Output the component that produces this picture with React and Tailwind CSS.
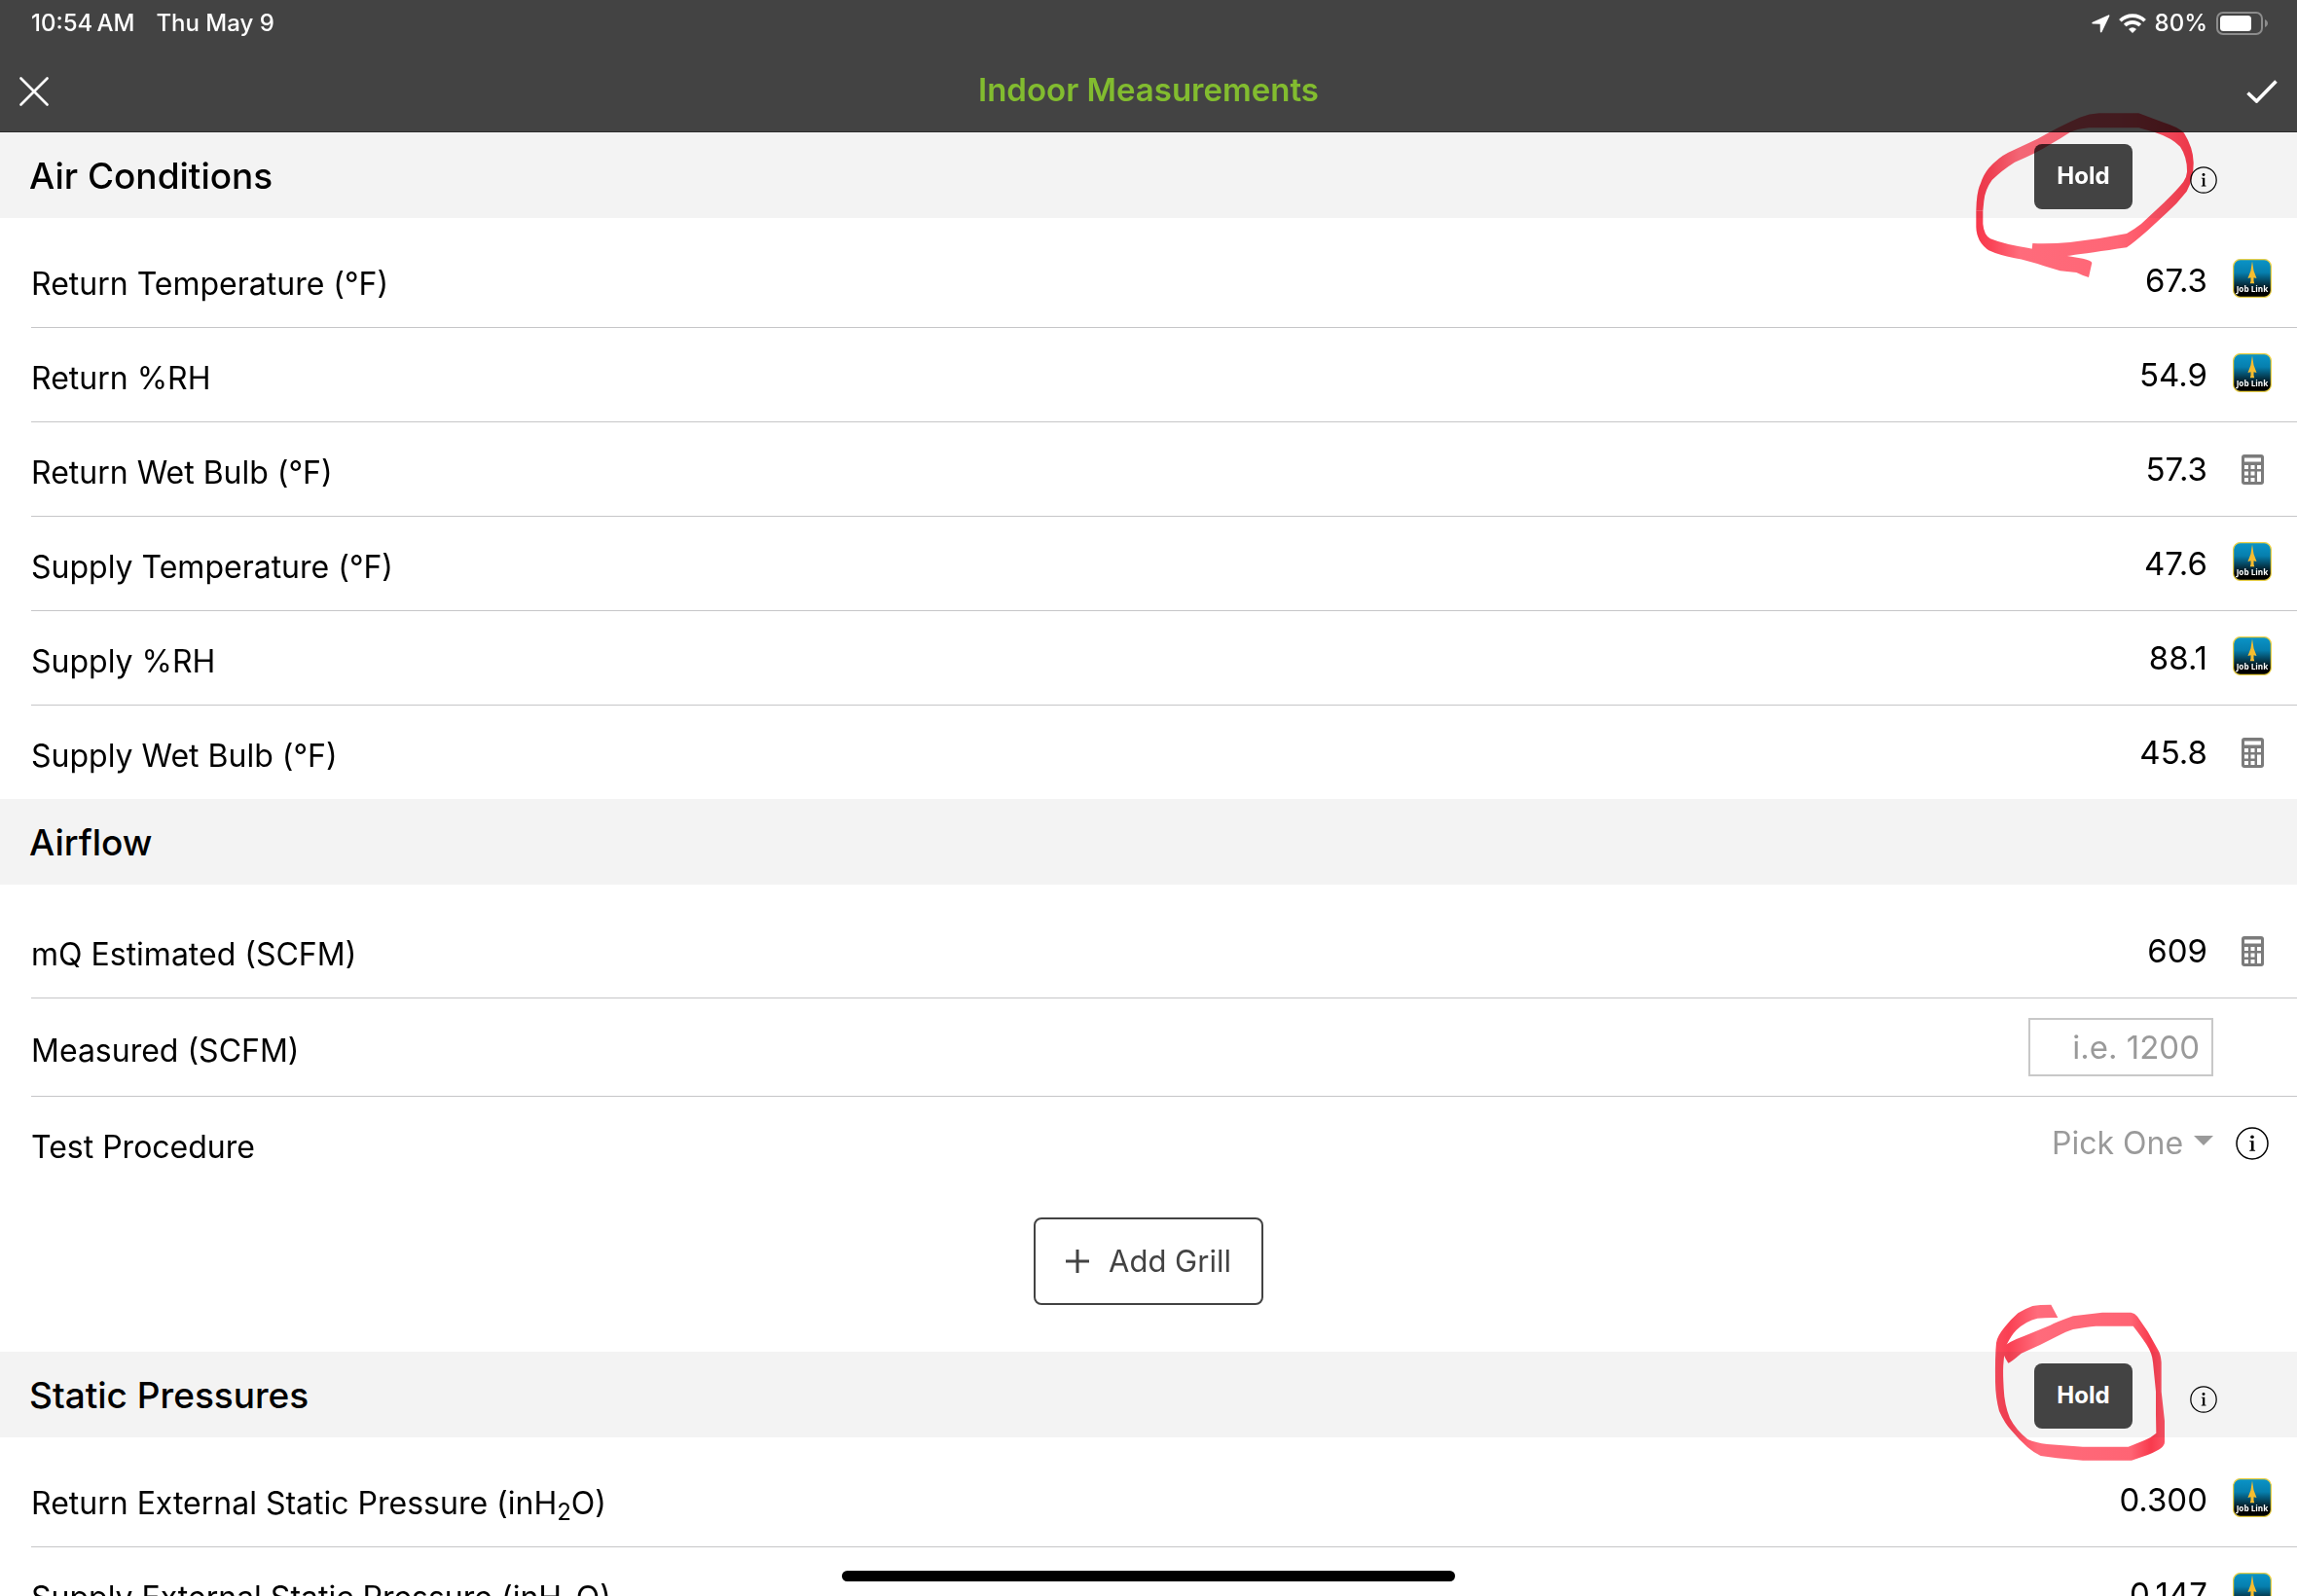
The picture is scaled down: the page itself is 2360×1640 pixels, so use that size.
import { useState } from 'react';

const airConditions = [
  { id: 'return-temp', label: 'Return Temperature (°F)', value: '67.3', source: 'joblink' },
  { id: 'return-rh', label: 'Return %RH', value: '54.9', source: 'joblink' },
  { id: 'return-wb', label: 'Return Wet Bulb (°F)', value: '57.3', source: 'calc' },
  { id: 'supply-temp', label: 'Supply Temperature (°F)', value: '47.6', source: 'joblink' },
  { id: 'supply-rh', label: 'Supply %RH', value: '88.1', source: 'joblink' },
  { id: 'supply-wb', label: 'Supply Wet Bulb (°F)', value: '45.8', source: 'calc' },
];

const staticPressures = [
  { id: 'return-esp', name: 'Return External Static Pressure', value: '0.300' },
  { id: 'supply-esp', name: 'Supply External Static Pressure', value: '0.147' },
];

const JobLinkIcon = () => (
  <svg className="mb-1 w-10 h-10" viewBox="0 0 39 39" role="img" aria-label="Job Link">
    <defs>
      <linearGradient id="jobLinkSky" x1="0" y1="0" x2="0" y2="1">
        <stop offset="0" stopColor="#0a94c8" />
        <stop offset="0.35" stopColor="#067fae" />
        <stop offset="0.72" stopColor="#04202c" />
        <stop offset="0.85" stopColor="#000" />
      </linearGradient>
    </defs>
    <rect x="0.6" y="0.6" width="37.8" height="37.8" rx="7" fill="url(#jobLinkSky)" stroke="#e9cf45" strokeWidth="1.2" />
    <path d="M19.500 2.500l1.500 9.500 2.900 7.500-2.900-.8v3.600l.7 2.200h-4.400l.7-2.200v-3.600l-2.900.8 2.900-7.500z" fill="#f6bd2f" />
    <text x="19.5" y="33" textAnchor="middle" fill="#fff" className="font-['Open_Sans',sans-serif] font-bold text-[8px]">
      Job Link
    </text>
  </svg>
);

const CalculatorIcon = () => (
  <svg className="w-[23px] h-[31px]" viewBox="0 0 23 31" aria-hidden="true">
    <rect width="23" height="31" rx="3" fill="#7b7b7b" />
    <path
      d="M3 3.5h17v4H3zM3 11h4v4H3zM9.5 11h4v4h-4zM16 11h4v4h-4zM3 17.500h4v4H3zM9.500 17.500h4v4h-4zM3 24h4v4H3zM9.500 24h4v4h-4zM16 17.500h4V28h-4z"
      fill="#fff"
    />
  </svg>
);

const InfoIcon = ({ className }) => (
  <svg className={className} viewBox="0 0 34 34" aria-hidden="true">
    <circle cx="17" cy="17" r="16" fill="none" stroke="#000" strokeWidth="1.5" />
    <circle cx="17" cy="10.200" r="1.800" />
    <path d="M14.200 14.200h4.300v9.400l1.600.4v.8h-5.900V24l1.700-.4v-8.200l-1.700-.4z" />
  </svg>
);

const StatusBar = () => (
  <div className="flex h-12 items-center justify-between pl-8 pr-[29px] text-2xl font-medium">
    <div className="flex gap-[22px]">
      <span>10:54&#8201;AM</span>
      <span>Thu May 9</span>
    </div>
    <div className="flex items-center gap-[9px]">
      <svg className="w-[19px] h-[19px]" viewBox="0 0 19 19" aria-hidden="true">
        <path d="M17.200.4L1 7.700c-1.200.6-1 1.900.3 1.900l7.400.1.1 7.600c0 1.400 1.300 1.600 1.900.3l7.600-16.100C18.700.7 18 0 17.200.4z" fill="#fff" />
      </svg>
      <svg className="w-[28px] h-5" viewBox="0 0 28 20" aria-hidden="true">
        <g fill="none" stroke="#fff" strokeWidth="3.700">
          <path d="M1.400 7.200a18 18 0 0 1 25.200 0" />
          <path d="M6.200 12a11.200 11.200 0 0 1 15.600 0" />
        </g>
        <path d="M14 20l-4-4.100a5.800 5.800 0 0 1 8 0z" fill="#fff" />
      </svg>
      <span>80%</span>
      <svg className="w-[54px] h-6" viewBox="0 0 54 24" aria-hidden="true">
        <rect x="1" y="1" width="46" height="22" rx="6" fill="none" stroke="#8c8c8c" strokeWidth="2" />
        <rect x="4" y="4" width="32" height="16" rx="3.500" fill="#fff" />
        <path d="M50 8c4 1.500 4 6.500 0 8z" fill="#8c8c8c" />
      </svg>
    </div>
  </div>
);

// Hand drawn highlighter loops, both inked like a real marker
const MarkerLoopWide = () => (
  <svg
    className="pointer-events-none absolute -top-[23px] right-[103px] h-[177px] w-[230px] mix-blend-multiply"
    viewBox="201 339 690 531"
    aria-hidden="true"
  >
    <defs>
      <linearGradient id="markerWide" gradientUnits="userSpaceOnUse" x1="211" y1="0" x2="881" y2="0">
        <stop offset="0" stopColor="#f8384b" />
        <stop offset="0.07" stopColor="#fa4457" />
        <stop offset="0.2" stopColor="#ff6b7b" />
        <stop offset="0.65" stopColor="#ff6676" />
        <stop offset="0.85" stopColor="#fc4f61" />
        <stop offset="1" stopColor="#f8384b" />
      </linearGradient>
    </defs>
    <path
      d="M385 750Q440 752 500 747Q590 737 675 720Q700 706 720 690L790 625Q835 580 850 560Q860 545 861 530Q862 485 840 452Q815 425 760 407L712 394H560Q520 398 500 408Q470 428 440 445Q390 476 330 500Q290 525 260 555Q238 585 235 620L232 650H211Q212 590 225 565Q232 540 250 518Q280 485 310 470L400 428Q470 388 530 362Q560 350 590 349H712L790 378Q835 392 852 410Q880 455 881 500Q882 550 860 590Q830 628 800 655L740 710Q700 745 675 763Q560 780 500 788Q440 794 380 793Z"
      fill="url(#markerWide)"
    />
    <path
      d="M232 650V690Q235 725 255 736Q300 754 370 764L470 785L540 797Q565 802 568 810L558 855Q540 850 520 840L470 835L420 820Q370 803 330 796Q280 786 250 772Q212 745 211 700V650Z"
      fill="url(#markerWide)"
    />
  </svg>
);

const MarkerLoopTall = () => (
  <svg
    className="pointer-events-none absolute -top-[51px] right-[133px] h-[166px] w-[180px] mix-blend-multiply"
    viewBox="201 54 540 498"
    aria-hidden="true"
  >
    <defs>
      <linearGradient id="markerTall" gradientUnits="userSpaceOnUse" x1="210" y1="0" x2="732" y2="0">
        <stop offset="0" stopColor="#fb4a5c" />
        <stop offset="0.08" stopColor="#fa4053" />
        <stop offset="0.25" stopColor="#ff6b7b" />
        <stop offset="0.8" stopColor="#ff6474" />
        <stop offset="0.92" stopColor="#f83a4d" />
        <stop offset="1" stopColor="#fc5365" />
      </linearGradient>
    </defs>
    <path
      d="M382 62Q345 62 325 66Q300 75 280 88Q255 110 240 130Q215 160 213 180Q209 220 210 300H235Q233 260 236 235Q238 205 245 185Q260 155 275 140Q305 112 340 104Q370 101 403 102Z"
      fill="url(#markerTall)"
    />
    <path
      d="M210 300Q211 350 222 390Q240 430 260 450Q310 510 350 528L400 535L480 542H630L680 525Q712 512 720 505Q732 495 732 485V420L722 330V240Q720 215 712 202L680 145L648 98Q640 88 628 86H540L450 97Q400 115 380 125L300 158Q250 176 230 195Q232 215 250 242Q260 238 290 212Q350 187 400 160Q430 144 450 138Q490 130 520 128H635Q660 160 675 183Q694 212 696 240L705 330V400L706 458Q690 472 670 480L620 500H480L370 492Q335 488 310 477Q275 450 255 412Q238 370 236 320L235 300Z"
      fill="url(#markerTall)"
    />
  </svg>
);

const SectionHeader = ({ title, hold, onHold, marker }) => (
  <div className="relative flex h-[88px] items-center justify-between bg-[#f3f3f3] pl-[30px] pr-[82px]">
    <h2 className="text-[37px] font-medium leading-none">{title}</h2>
    {onHold && (
      <div className="flex items-center gap-[59px] pt-0.5">
        <button
          type="button"
          aria-pressed={hold}
          onClick={onHold}
          className="h-[67px] w-[101px] rounded-lg bg-[#434343] text-2xl font-bold text-white"
        >
          Hold
        </button>
        <button type="button" aria-label={`About ${title}`} className="mt-2">
          <InfoIcon className="h-7 w-7" />
        </button>
      </div>
    )}
    {marker}
  </div>
);

const Row = ({ label, htmlFor, children, icon, last, className = 'h-[97px]' }) => (
  <div
    className={`ml-8 flex items-center gap-5 pr-[26px] ${last ? 'h-24' : `border-b border-[#c6c6c8] ${className}`}`}
  >
    <label htmlFor={htmlFor} className="flex-1 pt-2 text-[32px]">{label}</label>
    {children}
    <div className="flex w-10 justify-center">{icon}</div>
  </div>
);

const Value = ({ id, children }) => (
  <output id={id} className="pr-1.5">{children}</output>
);

const App = () => {
  const [airHold, setAirHold] = useState(false);
  const [staticHold, setStaticHold] = useState(false);
  const [measured, setMeasured] = useState('');

  return (
    <div className="relative h-screen overflow-hidden bg-white font-['Inter',sans-serif] text-[33px] leading-10 text-black">
      <header className="border-b border-[#2b2b2b] bg-[#434343] text-white">
        <StatusBar />
        <div className="grid h-[87px] grid-cols-3 items-center px-5">
          <button type="button" aria-label="Close" className="justify-self-start pt-1">
            <svg className="h-[30px] w-[30px]" viewBox="0 0 30 30" aria-hidden="true">
              <path d="M1.500 1.500l27 27M28.500 1.500l-27 27" stroke="#fff" strokeWidth="2.600" strokeLinecap="round" />
            </svg>
          </button>
          <h1 className="text-center text-[33px] font-semibold text-[#82bc2f]">Indoor Measurements</h1>
          <button type="button" aria-label="Save" className="justify-self-end pt-1">
            <svg className="h-6 w-8" viewBox="0 0 32 24" aria-hidden="true">
              <path d="M1.500 13.500l9 8.500L30.500 1.500" fill="none" stroke="#fff" strokeWidth="3.600" />
            </svg>
          </button>
        </div>
      </header>

      <main>
        <section>
          <SectionHeader
            title="Air Conditions"
            hold={airHold}
            onHold={() => setAirHold(!airHold)}
            marker={<MarkerLoopWide />}
          />
          <div className="pt-4">
            {airConditions.map((item, index) => (
              <Row
                key={item.id}
                label={item.label}
                htmlFor={item.id}
                icon={item.source === 'joblink' ? <JobLinkIcon /> : <CalculatorIcon />}
                last={index === airConditions.length - 1}
              >
                <Value id={item.id}>{item.value}</Value>
              </Row>
            ))}
          </div>
        </section>

        <section>
          <SectionHeader title="Airflow" />
          <div className="pt-5">
            <Row label="mQ Estimated (SCFM)" htmlFor="mq" icon={<CalculatorIcon />}>
              <Value id="mq">609</Value>
            </Row>
            <Row label="Measured (SCFM)" htmlFor="measured" className="h-[101px]">
              <input
                id="measured"
                type="text"
                inputMode="numeric"
                placeholder="i.e. 1200"
                value={measured}
                onChange={(e) => setMeasured(e.target.value)}
                className="h-[60px] w-[190px] border-2 border-[#c8c8c8] px-3 text-right placeholder:text-[#9a9a9a]"
              />
            </Row>
            <Row
              label="Test Procedure"
              htmlFor="procedure"
              icon={
                <button type="button" aria-label="About Test Procedure">
                  <InfoIcon className="h-[34px] w-[34px]" />
                </button>
              }
              last
            >
              <div className="relative flex">
                <select id="procedure" className="appearance-none bg-transparent pr-[30px] text-[32px] text-[#9a9a9a]">
                  <option>Pick One</option>
                </select>
                <svg className="pointer-events-none absolute right-0 top-3 h-2.5 w-5" viewBox="0 0 20 10" aria-hidden="true">
                  <path d="M0 0h20L10 10z" fill="#9a9a9a" />
                </svg>
              </div>
            </Row>
          </div>
          <div className="flex justify-center pb-12 pt-7">
            <button
              type="button"
              className="flex h-[90px] items-center gap-5 rounded-lg border-2 border-[#434343] px-[31px] text-[31px] text-[#434343]"
            >
              <svg className="h-6 w-6" viewBox="0 0 24 24" aria-hidden="true">
                <path d="M12 0v24M0 12h24" stroke="#434343" strokeWidth="3" />
              </svg>
              Add Grill
            </button>
          </div>
        </section>

        <section>
          <SectionHeader
            title="Static Pressures"
            hold={staticHold}
            onHold={() => setStaticHold(!staticHold)}
            marker={<MarkerLoopTall />}
          />
          <div className="pt-4">
            {staticPressures.map((item) => (
              <Row
                key={item.id}
                htmlFor={item.id}
                label={<>{item.name} (inH<sub className="text-2xl leading-none">2</sub>O)</>}
                icon={<JobLinkIcon />}
              >
                <Value id={item.id}>{item.value}</Value>
              </Row>
            ))}
          </div>
        </section>
      </main>

      {/* Home indicator */}
      <div className="absolute bottom-[15px] left-1/2 h-[11px] w-[630px] -translate-x-1/2 rounded-full bg-black"></div>
    </div>
  );
};

export default App;
